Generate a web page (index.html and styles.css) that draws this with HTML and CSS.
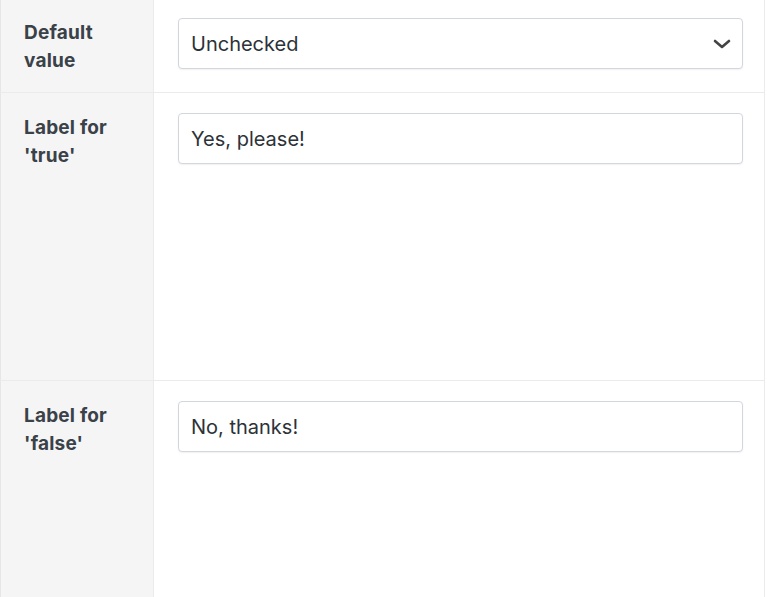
FILE: index.html
```html
<!DOCTYPE html>
<html lang="en">
<head>
    <meta charset="UTF-8">
    <title>Checkbox settings</title>
    <link rel="stylesheet" href="styles.css">
</head>
<body>
    <div class="settings">
        <div class="row row-first">
            <div class="label">Default value</div>
            <div class="field">
                <div class="select">
                    <span>Unchecked</span>
                    <svg class="chevron" width="18" height="10" viewBox="0 0 18 10">
                        <path d="M2 2 L9 8 L16 2" fill="none" stroke="#444" stroke-width="2.6" stroke-linecap="round" stroke-linejoin="round"/>
                    </svg>
                </div>
            </div>
        </div>

        <div class="row row-tall">
            <div class="label">Label for 'true'</div>
            <div class="field">
                <input class="input" type="text" value="Yes, please!">
            </div>
        </div>

        <div class="row row-last">
            <div class="label">Label for 'false'</div>
            <div class="field">
                <input class="input" type="text" value="No, thanks!">
            </div>
        </div>
    </div>
</body>
</html>
```

FILE: styles.css
```css
body {
    margin: 0;
    font-family: Inter, "Noto Sans", sans-serif;
    background: #fff;
    color: #33393f;
    overflow: hidden;
}

.settings {
    width: 765px;
    margin-top: -2px;
}

.row {
    display: grid;
    grid-template-columns: 154px 1fr;
    border-bottom: 1px solid #ebebeb;
}

.row-first {
    height: 94px;
}

.row-tall {
    height: 287px;
}

.row-last {
    height: 218px;
    border-bottom: none;
}

.label {
    background: #f5f5f5;
    border-left: 1px solid #e6e6e6;
    border-right: 1px solid #ebebeb;
    padding: 21px 20px 0 23px;
    font-size: 19px;
    font-weight: 700;
    line-height: 28px;
    letter-spacing: 0.2px;
    color: #3a4148;
}

.field {
    padding: 20px 21px 0 24px;
    border-right: 1px solid #ebebeb;
}

.select,
.input {
    box-sizing: border-box;
    display: flex;
    align-items: center;
    width: 100%;
    height: 51px;
    padding: 0 12px;
    border: 1px solid #d3d6dc;
    border-radius: 4px;
    background: #fff;
    box-shadow: 0 1px 2px rgba(0, 0, 0, 0.06);
    font-family: Inter, "Noto Sans", sans-serif;
    font-size: 20px;
    color: #2c3238;
}

.select {
    justify-content: space-between;
}

.chevron {
    margin-right: -1px;
}

.input {
    outline: none;
}
```
